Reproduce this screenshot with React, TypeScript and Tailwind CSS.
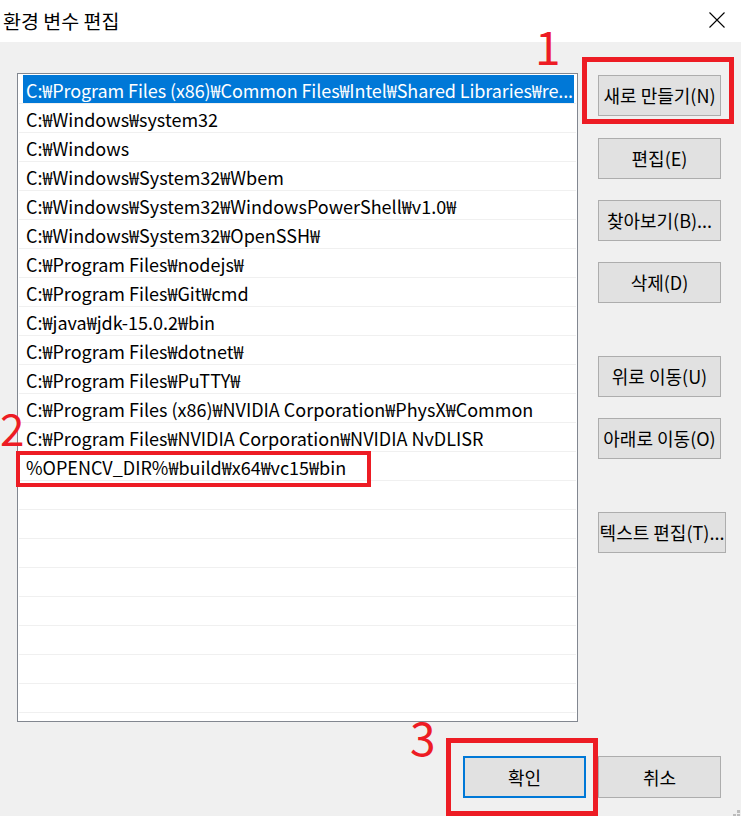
import React from "react";

const entries = [
  "C:₩Program Files (x86)₩Common Files₩Intel₩Shared Libraries₩re...",
  "C:₩Windows₩system32",
  "C:₩Windows",
  "C:₩Windows₩System32₩Wbem",
  "C:₩Windows₩System32₩WindowsPowerShell₩v1.0₩",
  "C:₩Windows₩System32₩OpenSSH₩",
  "C:₩Program Files₩nodejs₩",
  "C:₩Program Files₩Git₩cmd",
  "C:₩java₩jdk-15.0.2₩bin",
  "C:₩Program Files₩dotnet₩",
  "C:₩Program Files₩PuTTY₩",
  "C:₩Program Files (x86)₩NVIDIA Corporation₩PhysX₩Common",
  "C:₩Program Files₩NVIDIA Corporation₩NVIDIA NvDLISR",
  "%OPENCV_DIR%₩build₩x64₩vc15₩bin",
];

const rows = [...entries, ...Array(22 - entries.length).fill("")];

function Btn({ label, className = "" }: { label: string; className?: string }) {
  return (
    <div
      className={`h-[41px] w-[123px] bg-[#e1e1e1] border border-[#adadad] flex items-center justify-center text-[18px] text-black whitespace-nowrap ${className}`}
    >
      {label}
    </div>
  );
}

export default function App() {
  return (
    <div className="relative w-[741px] h-[816px] bg-[#f0f0f0] overflow-hidden font-[family-name:Noto_Sans_CJK_KR,sans-serif] text-black">
      {/* Title bar */}
      <div className="h-[42px] bg-white flex items-center justify-between pl-[3px] pr-[16px]">
        <span className="text-[19.5px] leading-none">환경 변수 편집</span>
        <svg width="16" height="16" viewBox="0 0 16 16" className="mb-[3px]">
          <path d="M0.5 0.5 L15.5 15.5 M15.5 0.5 L0.5 15.5" stroke="#000" strokeWidth="1.1" fill="none" />
        </svg>
      </div>

      {/* Body */}
      <div className="pl-[17px] pt-[31px] flex flex-col">
        <div className="flex">
          {/* List */}
          <div className="w-[561px] h-[649px] bg-white border border-[#828790] pt-[1px] overflow-hidden">
            {rows.map((t, i) => (
              <div key={i} className="h-[29px] border-b border-[#f0f0f0] mx-[1px] flex">
                {i === 0 ? (
                  <div className="ml-[4px] mr-[2px] flex-1 bg-[#0078d7] text-white flex items-center pl-[3px] pt-[2px] text-[18px] tracking-[-0.09px] whitespace-nowrap overflow-hidden">
                    {t}
                  </div>
                ) : (
                  <div className="ml-[4px] flex-1 flex items-center pl-[3px] pt-[2px] text-[18px] whitespace-nowrap overflow-hidden">
                    {t}
                  </div>
                )}
              </div>
            ))}
          </div>

          {/* Right buttons */}
          <div className="ml-[20px] pt-[2px] flex flex-col">
            <Btn label="새로 만들기(N)" />
            <Btn label="편집(E)" className="mt-[22px]" />
            <Btn label="찾아보기(B)..." className="mt-[21px]" />
            <Btn label="삭제(D)" className="mt-[21px]" />
            <Btn label="위로 이동(U)" className="mt-[53px]" />
            <Btn label="아래로 이동(O)" className="mt-[21px]" />
            <Btn label="텍스트 편집(T)..." className="mt-[53px] w-[128px]" />
          </div>
        </div>

        {/* Bottom buttons */}
        <div className="flex justify-end pr-[20px] mt-[34px] gap-[12px]">
          <div className="h-[42px] w-[123px] bg-[#e1e1e1] border-2 border-[#0078d7] flex items-center justify-center text-[18px]">
            확인
          </div>
          <div className="h-[42px] w-[123px] bg-[#e1e1e1] border border-[#adadad] flex items-center justify-center text-[18px]">
            취소
          </div>
        </div>
      </div>

      {/* Resize grip */}
      <div className="absolute right-[1px] bottom-[3px] w-[3px] h-[3px] bg-[#bcbcbc]" />
      <div className="absolute right-[1px] bottom-[0px] w-[3px] h-[2px] bg-[#bcbcbc]" />
      <div className="absolute right-[5px] bottom-[0px] w-[3px] h-[2px] bg-[#bcbcbc]" />

      {/* Annotations */}
      <div className="absolute left-[582px] top-[57px] w-[152px] h-[67px] border-[5px] border-[#ed1c24]" />
      <div className="absolute left-[16px] top-[451px] w-[355px] h-[36px] border-[4px] border-[#ed1c24]" />
      <div className="absolute left-[446px] top-[738px] w-[152px] h-[78px] border-[5px] border-[#ed1c24]" />
      <span className="absolute left-[535px] top-[22px] text-[46px] leading-none text-[#ed1c24]">1</span>
      <span className="absolute left-[0px] top-[405px] text-[44px] leading-none text-[#ed1c24]">2</span>
      <span className="absolute left-[410px] top-[713px] text-[46px] leading-none text-[#ed1c24]">3</span>
    </div>
  );
}
